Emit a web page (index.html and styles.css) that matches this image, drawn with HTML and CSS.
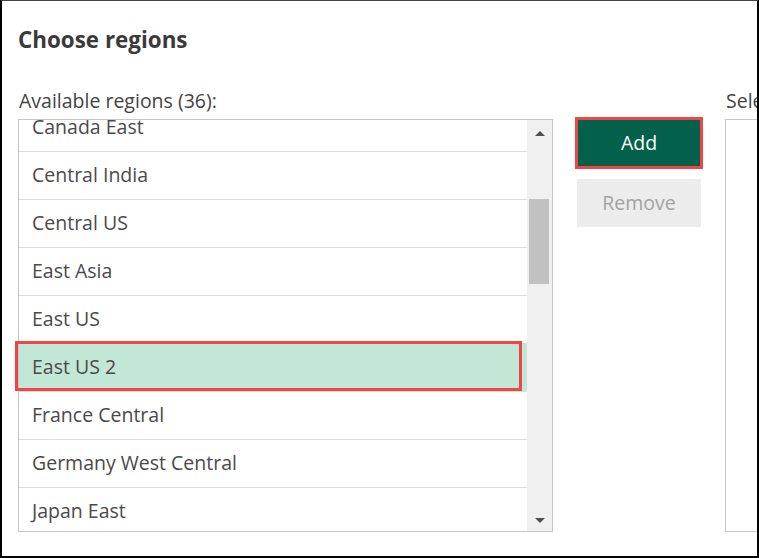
FILE: index.html
```html
<!DOCTYPE html>
<html lang="en">
<head>
<meta charset="utf-8">
<title>Choose regions</title>
<link rel="stylesheet" href="styles.css">
</head>
<body>
<div class="frame">
  <h1 class="title">Choose regions</h1>
  <div class="columns">
    <div class="col col-left">
      <div class="label">Available regions (36):</div>
      <div class="listbox">
        <ul class="items">
          <li class="item first">Canada East</li>
          <li class="item">Central India</li>
          <li class="item">Central US</li>
          <li class="item">East Asia</li>
          <li class="item">East US</li>
          <li class="item selected">East US 2</li>
          <li class="item">France Central</li>
          <li class="item">Germany West Central</li>
          <li class="item">Japan East</li>
        </ul>
        <div class="scrollbar">
          <div class="arrow arrow-up"></div>
          <div class="track"><div class="thumb"></div></div>
          <div class="arrow arrow-down"></div>
        </div>
      </div>
      <div class="focus-ring"></div>
    </div>
    <div class="col col-buttons">
      <button class="btn btn-add" type="button">Add</button>
      <button class="btn btn-remove" type="button" disabled>Remove</button>
    </div>
    <div class="col col-right">
      <div class="label">Selected regions (0):</div>
      <div class="listbox listbox-right"></div>
    </div>
  </div>
</div>
</body>
</html>
```

FILE: styles.css
```css
* { box-sizing: border-box; }
html, body { margin: 0; padding: 0; background: #fff; }
body { font-family: "Open Sans", "Liberation Sans", sans-serif; color: #444; }

.frame {
  width: 759px;
  height: 558px;
  border: 2px solid #000;
  border-top: 1px solid #444;
  overflow: hidden;
  padding: 23px 0 0 16px;
}

.title {
  margin: 0;
  font-size: 22.4px;
  line-height: 32px;
  font-weight: 700;
  color: #3a3a3a;
}

.columns {
  display: flex;
  align-items: flex-start;
  gap: 24px;
  margin-top: 34px;
}

.col { flex: none; }
.col-left { width: 535px; position: relative; }
.col-buttons { width: 124px; padding-top: 29px; display: flex; flex-direction: column; gap: 12px; }
.col-right { width: 200px; }

.label {
  font-size: 19.5px;
  line-height: 22px;
  height: 22px;
  padding-left: 1px;
  color: #444;
  white-space: nowrap;
  margin-bottom: 7px;
}

.listbox {
  height: 413px;
  border: 1px solid #c6c6c6;
  display: flex;
  overflow: hidden;
}
.listbox-right { width: 100%; }

.items {
  list-style: none;
  margin: 0;
  padding: 0;
  flex: 1;
  overflow: hidden;
}
.item {
  height: 48px;
  border-bottom: 1px solid #dcdcdc;
  font-size: 19.5px;
  line-height: 46px;
  padding-left: 13px;
  color: #4a4a4a;
  white-space: nowrap;
}
.item.first { margin-top: -16px; }
.item.selected { background: #c2e7d6; }

.focus-ring {
  position: absolute;
  left: -3px;
  top: 251px;
  width: 507px;
  height: 50px;
  border: 3px solid #f44546;
  pointer-events: none;
}

.scrollbar {
  width: 25px;
  flex: none;
  background: #f0f0f0;
  display: flex;
  flex-direction: column;
}
.arrow { height: 26px; flex: none; display: flex; align-items: center; justify-content: center; }
.arrow::before {
  content: "";
  width: 0; height: 0;
  border-left: 5px solid transparent;
  border-right: 5px solid transparent;
}
.arrow-up::before { border-bottom: 5px solid #505050; margin-left: 1px; }
.arrow-down::before { border-top: 5px solid #505050; margin-left: 1px; margin-top: 4px; }
.track { flex: 1; padding: 53px 3px 0 2px; }
.thumb { height: 85px; background: #c1c1c1; }

.btn {
  display: block;
  width: 124px;
  height: 48px;
  border: none;
  font-family: "Open Sans", "Liberation Sans", sans-serif;
  font-size: 19.5px;
  padding: 0 0 2px;
}
.btn-add {
  background: #03604a;
  color: #fff;
  outline: 3px solid #f44546;
  outline-offset: -1px;
}
.btn-remove {
  background: #ececec;
  color: #a3a3a3;
}
```
